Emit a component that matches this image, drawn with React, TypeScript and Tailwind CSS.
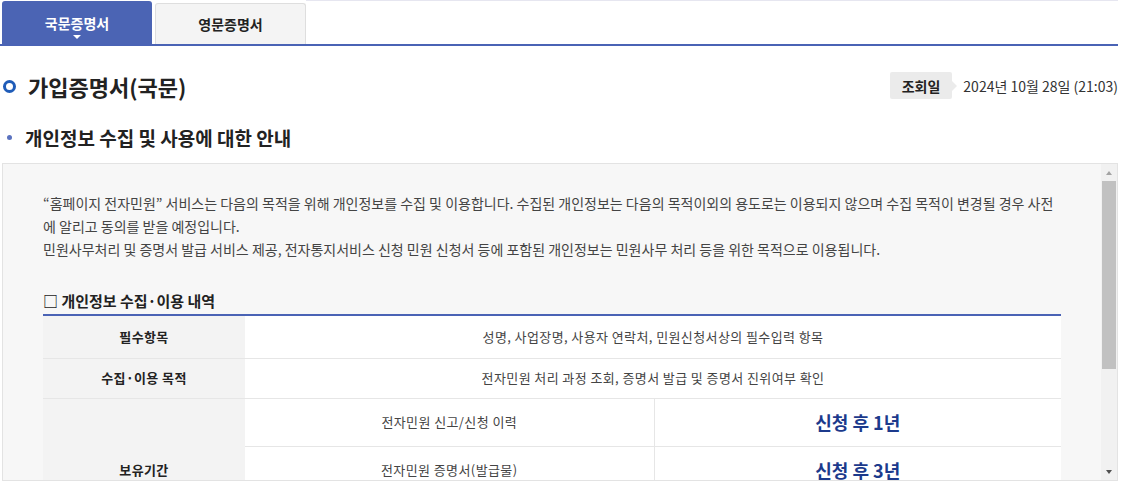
import React from "react";

const font = { fontFamily: '"Noto Sans CJK KR", "Noto Sans", sans-serif' };

export default function App() {
  return (
    <div className="w-[1127px] h-[490px] bg-white overflow-hidden" style={font}>
      <div className="w-[1118px]">
        {/* Tabs */}
        <div className="flex items-end h-[46px] border-b-2 border-[#4a63b5]">
          <div className="ml-[2px] w-[150px] h-[43px] bg-[#4b64b4] rounded-t-[3px] flex flex-col items-center justify-center relative">
            <span className="text-white text-[14px] font-bold leading-none mt-[1px]">국문증명서</span>
            <span className="absolute bottom-[5px] left-1/2 -translate-x-1/2 w-0 h-0 border-l-[4px] border-r-[4px] border-t-[4px] border-l-transparent border-r-transparent border-t-white" />
          </div>
          <div className="ml-[3px] w-[151px] h-[41px] bg-[#f4f4f4] border border-b-0 border-[#dedede] rounded-t-[3px] flex items-center justify-center">
            <span className="text-[#222] text-[14px] font-bold leading-none -mt-[1px]">영문증명서</span>
          </div>
          <div className="flex-1 h-[44px] border-t border-[#e6e6f0]" />
        </div>

        {/* Title row */}
        <div className="flex items-center justify-between h-[80px] pl-[3px]">
          <div className="flex items-center">
            <span className="w-[13px] h-[13px] rounded-full border-[3px] border-[#1f5cb8]" />
            <span className="ml-[12px] text-[22px] font-bold text-[#222] leading-none">가입증명서(국문)</span>
          </div>
          <div className="flex items-center mt-[-1px]">
            <div className="relative h-[27px] px-[12px] bg-[#ebebeb] flex items-center rounded-[2px]">
              <span className="text-[14px] font-bold text-[#222] leading-none">조회일</span>
              <span className="absolute right-[-5px] top-1/2 -translate-y-1/2 w-0 h-0 border-t-[5px] border-b-[5px] border-l-[5px] border-t-transparent border-b-transparent border-l-[#ebebeb]" />
            </div>
            <span className="ml-[11px] text-[14px] text-[#333] leading-none">2024년 10월 28일 (21:03)</span>
          </div>
        </div>

        {/* Sub heading */}
        <div className="flex items-center h-[22px] pl-[7px]">
          <span className="w-[5px] h-[5px] rounded-full bg-[#5a72bf]" />
          <span className="ml-[13px] text-[19px] font-bold text-[#222] leading-none">개인정보 수집 및 사용에 대한 안내</span>
        </div>

        {/* Scroll box */}
        <div className="mt-[15px] ml-[2px] h-[318px] border border-[#e3e3e3] bg-[#f7f7f7] flex overflow-hidden">
          <div className="flex-1 overflow-hidden pt-[28px] px-[40px]">
            <p className="text-[14px] leading-[23px] text-[#444]">
              “홈페이지 전자민원” 서비스는 다음의 목적을 위해 개인정보를 수집 및 이용합니다. 수집된 개인정보는 다음의 목적이외의 용도로는 이용되지 않으며 수집 목적이 변경될 경우 사전
              <br />
              에 알리고 동의를 받을 예정입니다.
              <br />
              민원사무처리 및 증명서 발급 서비스 제공, 전자통지서비스 신청 민원 신청서 등에 포함된 개인정보는 민원사무 처리 등을 위한 목적으로 이용됩니다.
            </p>

            <div className="mt-[32px] text-[15px] font-bold text-[#222] leading-none pb-[6px] border-b-2 border-[#4a63b5]">
              □ 개인정보 수집·이용 내역
            </div>

            <table className="w-full border-collapse text-[13px] tracking-[0.4px]">
              <tbody>
                <tr className="h-[42px] border-b border-[#e6e6e6]">
                  <th className="w-[202px] bg-[#f3f3f3] font-bold text-[#222]">필수항목</th>
                  <td colSpan={2} className="bg-white text-center text-[#444]">성명, 사업장명, 사용자 연락처, 민원신청서상의 필수입력 항목</td>
                </tr>
                <tr className="h-[40px] border-b border-[#e6e6e6]">
                  <th className="bg-[#f3f3f3] font-bold text-[#222]">수집·이용 목적</th>
                  <td colSpan={2} className="bg-white text-center text-[#444]">전자민원 처리 과정 조회, 증명서 발급 및 증명서 진위여부 확인</td>
                </tr>
                <tr className="h-[48px] border-b border-[#e6e6e6]">
                  <th rowSpan={3} className="bg-[#f3f3f3] font-bold text-[#222] align-middle">보유기간</th>
                  <td className="w-[409px] bg-white text-center text-[#444] border-r border-[#e6e6e6]">전자민원 신고/신청 이력</td>
                  <td className="bg-white text-center text-[18px] tracking-normal font-bold text-[#1c3a8c]">신청 후 1년</td>
                </tr>
                <tr className="h-[48px] border-b border-[#e6e6e6]">
                  <td className="bg-white text-center text-[#444] border-r border-[#e6e6e6]">전자민원 증명서(발급물)</td>
                  <td className="bg-white text-center text-[18px] tracking-normal font-bold text-[#1c3a8c]">신청 후 3년</td>
                </tr>
                <tr className="h-[48px] border-b border-[#e6e6e6]">
                  <td className="bg-white text-center text-[#444] border-r border-[#e6e6e6]">전자통지서비스 신청 이력</td>
                  <td className="bg-white text-center text-[18px] tracking-normal font-bold text-[#1c3a8c]">신청 후 5년</td>
                </tr>
              </tbody>
            </table>
          </div>

          {/* Scrollbar */}
          <div className="w-[16px] bg-[#f1f1f1] flex flex-col items-center">
            <div className="h-[17px] flex items-center justify-center">
              <span className="w-0 h-0 border-l-[3.5px] border-r-[3.5px] border-b-[4px] border-l-transparent border-r-transparent border-b-[#a3a3a3]" />
            </div>
            <div className="w-[14px] h-[188px] bg-[#c1c1c1]" />
            <div className="flex-1" />
            <div className="h-[17px] flex items-center justify-center">
              <span className="w-0 h-0 border-l-[3.5px] border-r-[3.5px] border-t-[4px] border-l-transparent border-r-transparent border-t-[#505050]" />
            </div>
          </div>
        </div>
      </div>
    </div>
  );
}
